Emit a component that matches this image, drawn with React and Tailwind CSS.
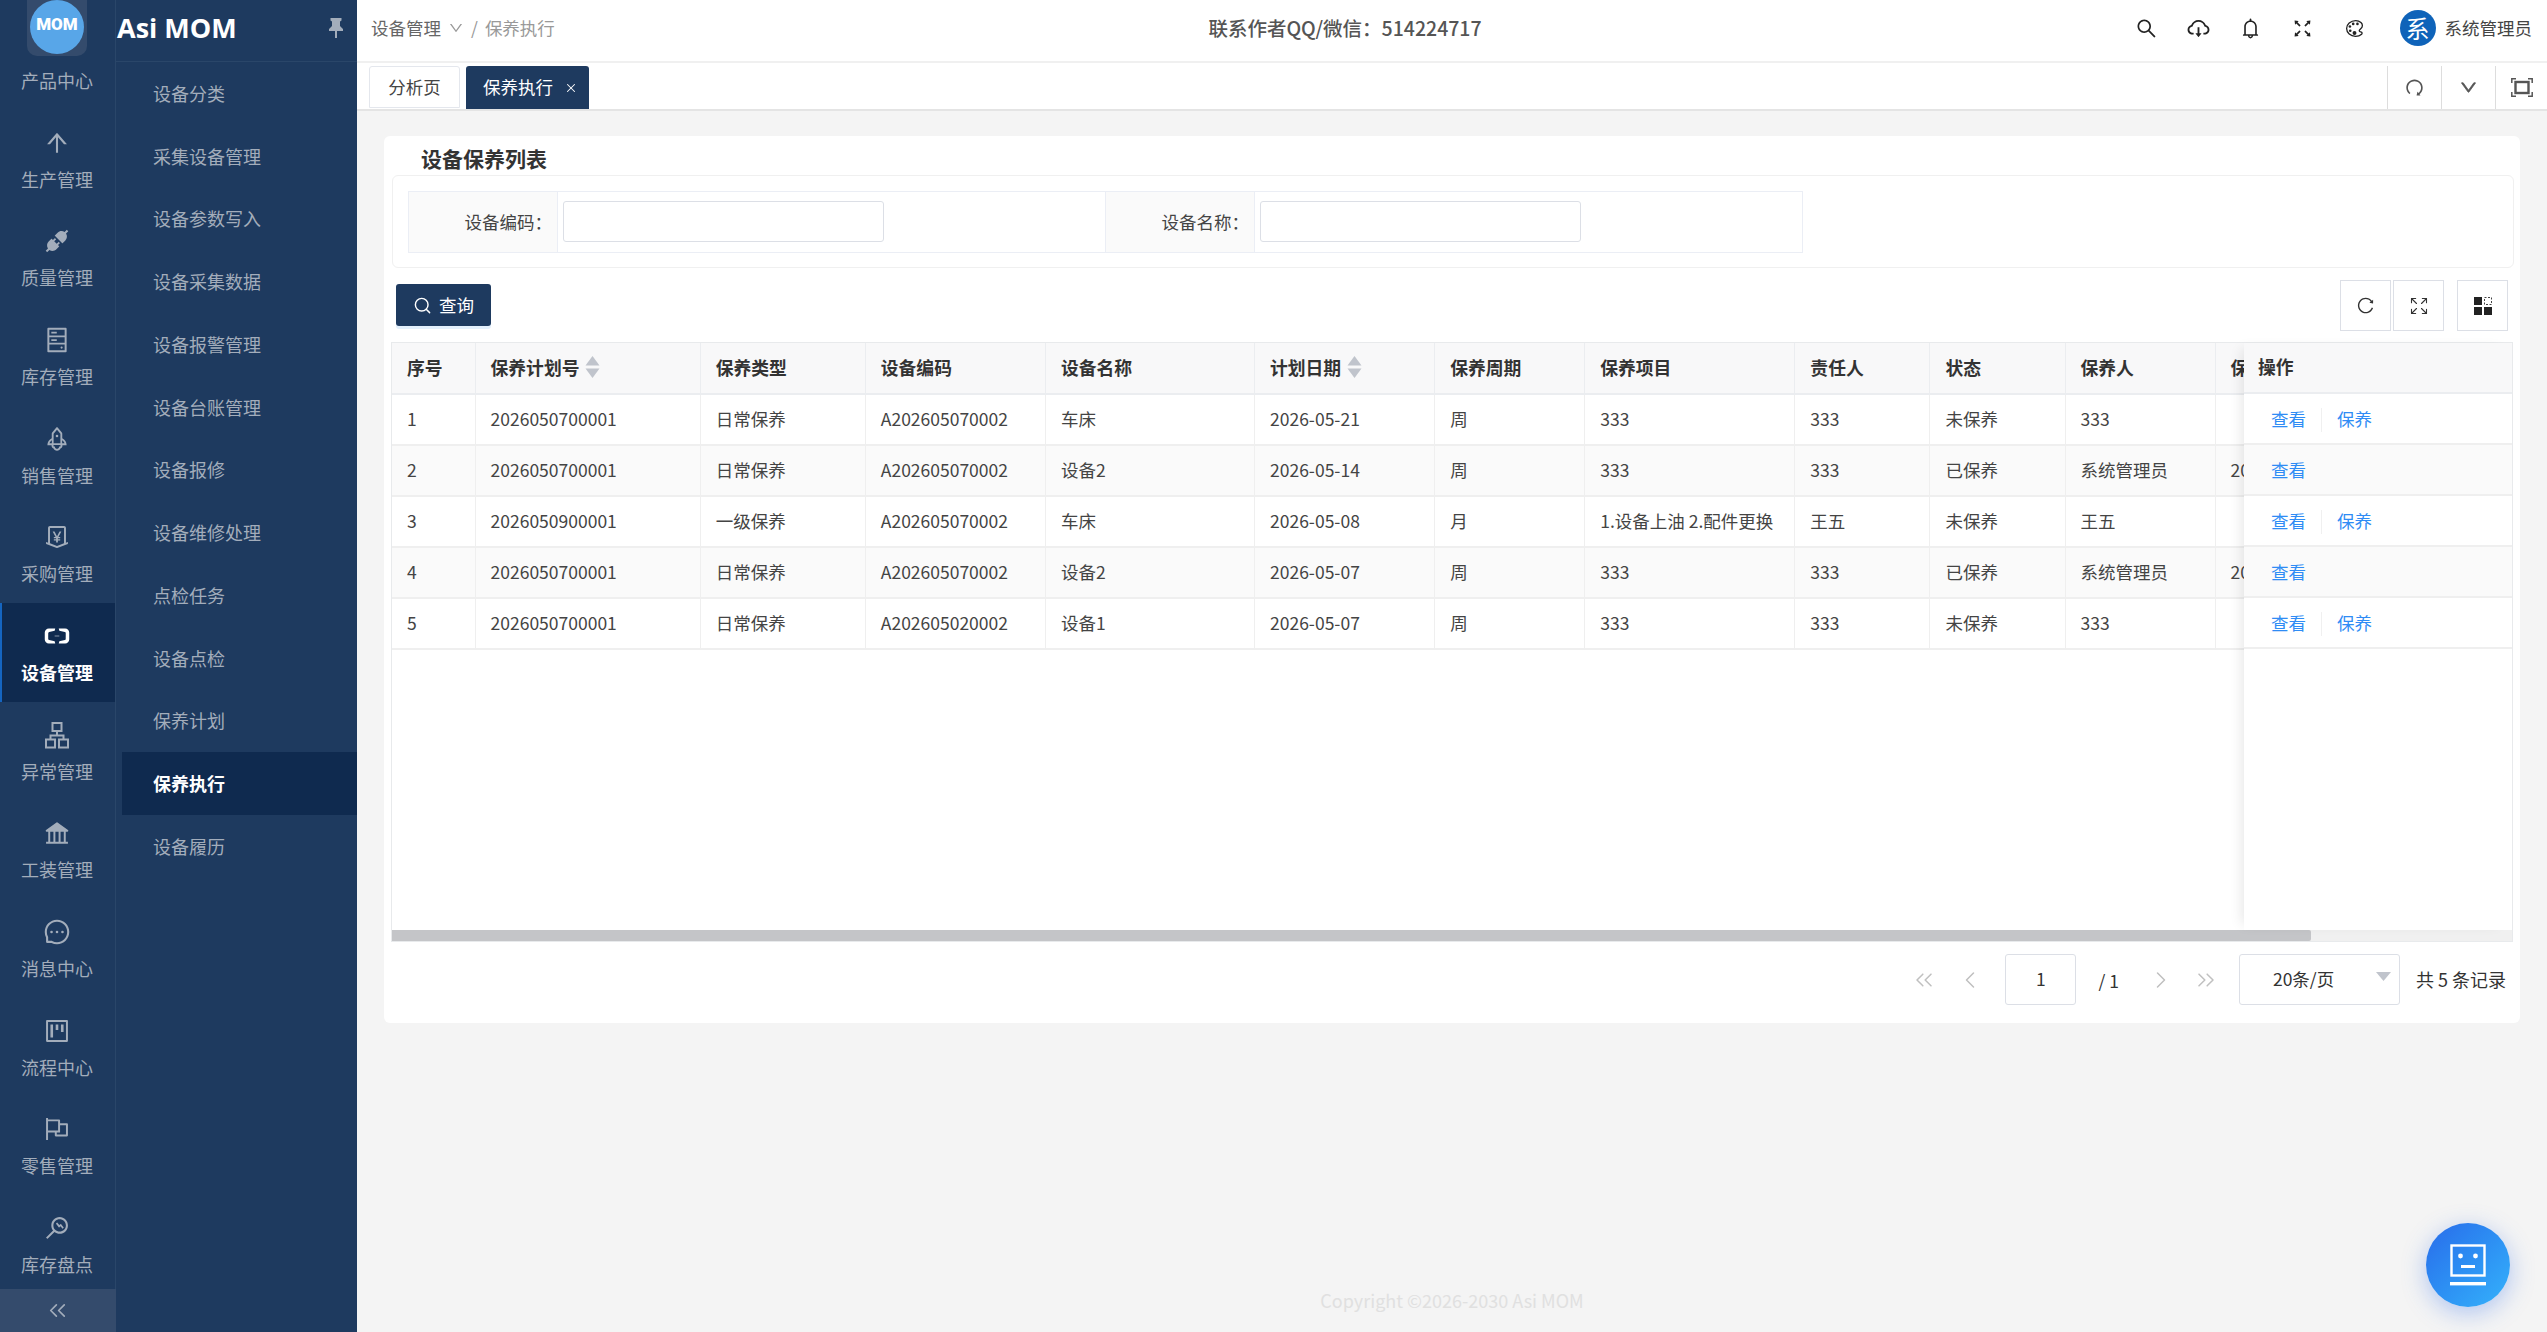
import React from "react";
import {
  AiOutlineArrowUp, AiFillApi, AiOutlineHdd, AiOutlineRocket, AiOutlineMoneyCollect,
  AiOutlineAliyun, AiFillBank, AiOutlineMessage, AiOutlineProject,
  AiOutlineFlag, AiOutlineMonitor, AiOutlineSearch, AiOutlineCloudDownload,
  AiOutlineBell, AiOutlineFullscreen, AiOutlineDown, AiOutlineRedo, AiOutlineReload,
} from "react-icons/ai";
import { IoColorPaletteOutline } from "react-icons/io5";
import { ChevronLeft, ChevronRight, ChevronsLeft, ChevronsRight, X, Search, Expand } from "lucide-react";

function ClusterIcon() {
  return (
    <svg width="28" height="28" viewBox="0 0 28 28" fill="none" stroke="currentColor" strokeWidth="2">
      <rect x="9.500" y="2" width="9" height="8" />
      <rect x="3" y="18.500" width="9" height="8" />
      <rect x="16" y="18.500" width="9" height="8" />
      <path d="M14 10v4.500M7.500 18.500v-4h13v4" />
    </svg>
  );
}

const railItems = [
  { label: "生产管理", icon: AiOutlineArrowUp },
  { label: "质量管理", icon: AiFillApi },
  { label: "库存管理", icon: AiOutlineHdd },
  { label: "销售管理", icon: AiOutlineRocket },
  { label: "采购管理", icon: AiOutlineMoneyCollect },
  { label: "设备管理", icon: AiOutlineAliyun, active: true },
  { label: "异常管理", icon: ClusterIcon },
  { label: "工装管理", icon: AiFillBank },
  { label: "消息中心", icon: AiOutlineMessage },
  { label: "流程中心", icon: AiOutlineProject },
  { label: "零售管理", icon: AiOutlineFlag },
  { label: "库存盘点", icon: AiOutlineMonitor },
];

const subItems = [
  "设备分类", "采集设备管理", "设备参数写入", "设备采集数据", "设备报警管理", "设备台账管理",
  "设备报修", "设备维修处理", "点检任务", "设备点检", "保养计划", "保养执行", "设备履历",
];

const columns = [
  { title: "序号", w: 83 },
  { title: "保养计划号", w: 225, sort: true },
  { title: "保养类型", w: 165 },
  { title: "设备编码", w: 180 },
  { title: "设备名称", w: 209 },
  { title: "计划日期", w: 180, sort: true },
  { title: "保养周期", w: 150 },
  { title: "保养项目", w: 210 },
  { title: "责任人", w: 135 },
  { title: "状态", w: 135 },
  { title: "保养人", w: 150 },
  { title: "保养日期", w: 253 },
  { title: "操作", w: 270 },
];

const rows = [
  ["1", "2026050700001", "日常保养", "A202605070002", "车床", "2026-05-21", "周", "333", "333", "未保养", "333", ""],
  ["2", "2026050700001", "日常保养", "A202605070002", "设备2", "2026-05-14", "周", "333", "333", "已保养", "系统管理员", "2026-05-07"],
  ["3", "2026050900001", "一级保养", "A202605070002", "车床", "2026-05-08", "月", "1.设备上油 2.配件更换", "王五", "未保养", "王五", ""],
  ["4", "2026050700001", "日常保养", "A202605070002", "设备2", "2026-05-07", "周", "333", "333", "已保养", "系统管理员", "2026-05-07"],
  ["5", "2026050700001", "日常保养", "A202605020002", "设备1", "2026-05-07", "周", "333", "333", "未保养", "333", ""],
];

function SortMark() {
  return (
    <svg width="15" height="22" viewBox="0 0 15 22" className="ml-[6px] shrink-0" fill="#c0c4cc">
      <path d="M7.5 0 14.5 9.5H.5z" />
      <path d="M7.5 22 14.5 12.5H.5z" />
    </svg>
  );
}

function Rail() {
  return (
    <div className="flex h-full w-[116px] shrink-0 flex-col">
      <div className="min-h-0 flex-1 overflow-hidden border-r border-[#2a4669]">
        <div className="flex h-[56px] justify-center pr-[1px]">
          <div className="flex h-[56px] w-[60px] items-start justify-center rounded-b-[10px] bg-[#344b6c]">
            <div className="flex h-[54px] w-[54px] items-center justify-center rounded-full bg-[#58a6e8] pb-[4px] font-['Roboto',sans-serif] text-[17px] font-black text-white">
              MOM
            </div>
          </div>
        </div>
        <div className="flex h-[53.5px] items-center justify-center pb-[4px] pr-[1px] text-[18px] text-[#a3adbb]">产品中心</div>
        {railItems.map((item) => {
          const Icon = item.icon;
          return (
            <div
              key={item.label}
              className={
                item.active
                  ? "flex h-[98.7px] flex-col items-center border-l-2 border-[#1565c0] bg-[#0f2a4f] pr-[3px] pt-[19px] font-bold text-white"
                  : "flex h-[98.7px] flex-col items-center pr-[1px] pt-[19px] text-[#a3adbb]"
              }
            >
              <Icon size={28} />
              <span className="mt-[9px] text-[18px] leading-[26px]">{item.label}</span>
            </div>
          );
        })}
      </div>
      <div className="flex h-[43px] shrink-0 items-center justify-center bg-[#344b6c] pr-[1px] text-[#a3adbb]">
        <ChevronsLeft size={27} strokeWidth={1.5} />
      </div>
    </div>
  );
}

function SubMenu() {
  return (
    <div className="flex h-full w-[241px] shrink-0 flex-col">
      <div className="flex h-[62px] shrink-0 items-center justify-between border-b border-[#2a4669] pb-[6px] pl-[1px] pr-[14px]">
        <span className="font-['Open_Sans',sans-serif] text-[27px] font-bold leading-none text-white">Asi MOM</span>
        <svg width="14" height="20" viewBox="0 0 14 20" fill="#a3adbb">
          <path d="M1.5 0h11v2.5l-1.5 1V8l3 3v2H8v7H6v-7H0v-2l3-3V3.500l-1.500-1z" />
        </svg>
      </div>
      <div className="flex flex-col">
        {subItems.map((s) => (
          <div
            key={s}
            className={
              s === "保养执行"
                ? "ml-[6px] flex h-[62.75px] items-center bg-[#0f2a4f] pl-[31px] text-[18px] font-bold text-white"
                : "flex h-[62.75px] items-center pl-[37px] text-[18px] text-[#a3adbb]"
            }
          >
            {s}
          </div>
        ))}
      </div>
    </div>
  );
}

function TopBar() {
  return (
    <div className="flex h-[63px] shrink-0 items-center border-b-2 border-[#f0f0f0] bg-white pb-[5px] pl-[14px] pr-[15px] text-[#333]">
      <div className="flex w-[768px] items-center gap-[7px] text-[17.5px] text-[#666]">
        <span>设备管理</span>
        <AiOutlineDown size={16} className="text-[#999]" />
        <span className="text-[#999]">/</span>
        <span className="text-[#999]">保养执行</span>
      </div>
      <div className="w-[412px] text-center text-[19.5px] font-medium text-[#555]">联系作者QQ/微信：514224717</div>
      <div className="ml-auto flex items-center">
        <div className="mr-[19px] flex items-center text-[#222]">
          <div className="flex w-[52px] justify-center"><AiOutlineSearch size={23} /></div>
          <div className="flex w-[52px] justify-center"><AiOutlineCloudDownload size={25} /></div>
          <div className="flex w-[52px] justify-center"><AiOutlineBell size={23} /></div>
          <div className="flex w-[52px] justify-center"><AiOutlineFullscreen size={23} /></div>
          <div className="flex w-[52px] justify-center"><IoColorPaletteOutline size={21} /></div>
        </div>
        <div className="flex h-[36px] w-[36px] items-center justify-center rounded-full bg-[#0f63b9] text-[24px] text-white">系</div>
        <span className="ml-[9px] text-[17.5px] text-[#444]">系统管理员</span>
      </div>
    </div>
  );
}

function TabBar() {
  return (
    <div className="flex h-[48px] shrink-0 border-b-2 border-[#e4e4e4] bg-white pl-[12px]">
      <div className="mt-[3px] flex h-[42px] w-[91px] items-center justify-center rounded-t-[3px] border border-[#e4e7ed] text-[17.5px] text-[#444]">
        分析页
      </div>
      <div className="ml-[6px] mt-[3px] flex h-[43px] w-[123px] items-center gap-[11px] rounded-t-[3px] bg-[#1e3a5f] pl-[17px] text-[17.5px] text-white">
        保养执行
        <X size={14} strokeWidth={1.8} />
      </div>
      <div className="ml-auto flex pt-[3px] text-[#555]">
        <div className="flex w-[54px] items-center justify-center border-l border-[#ddd]"><AiOutlineRedo size={21} /></div>
        <div className="flex w-[54px] items-center justify-center border-l border-[#ddd]">
          <AiOutlineDown size={19} stroke="currentColor" strokeWidth={40} />
        </div>
        <div className="flex w-[52px] items-center justify-center border-l border-[#ddd]">
          <svg width="22" height="19" viewBox="0 0 22 19" fill="none" stroke="#555" strokeWidth="1.500">
            <path d="M.8 5V.8H5M17 .8h4.200V5M21.200 14v4.200H17M5 18.200H.8V14" />
            <rect x="4.500" y="4" width="13" height="11" strokeWidth="2.400" />
          </svg>
        </div>
      </div>
    </div>
  );
}

function FilterField({ label }) {
  return (
    <div className="flex h-full w-[697px]">
      <div className="flex w-[150px] items-center justify-end border-x border-[#ebeef5] bg-[#fafafa] pr-[5px] pt-[2px] text-[17.5px] text-[#444]">
        {label}：
      </div>
      <div className="flex flex-1 items-center pl-[5px]">
        <div className="h-[41px] w-[321px] rounded-[3px] border border-[#dcdfe6] bg-white" />
      </div>
    </div>
  );
}

function Filters() {
  return (
    <div className="ml-[1px] mr-[-1px] flex h-[93px] items-center rounded-[6px] border border-[#f0f0f0] pl-[15px]">
      <div className="flex h-[62px] border-y border-r border-[#ebeef5]">
        <FilterField label="设备编码" />
        <FilterField label="设备名称" />
      </div>
    </div>
  );
}

function ToolButton({ children, className = "" }) {
  return (
    <div className={"flex h-[51px] w-[51px] items-center justify-center border border-[#dcdfe6] text-[#333] " + className}>
      {children}
    </div>
  );
}

function Toolbar() {
  return (
    <div className="flex h-[74px] items-start justify-between pl-[5px] pr-[5px]">
      <div className="mt-[16px] flex h-[42px] w-[95px] items-center justify-center gap-[7px] rounded-[3px] bg-[#1e3a5f] text-[17.5px] text-white shadow-[0_3px_0_#e3f0fc]">
        <Search size={19} strokeWidth={1.8} />
        查询
      </div>
      <div className="mt-[12px] flex">
        <ToolButton><AiOutlineReload size={19} /></ToolButton>
        <ToolButton className="ml-[2px]"><Expand size={20} strokeWidth={1.3} /></ToolButton>
        <ToolButton className="ml-[13px]">
          <svg width="18" height="18" viewBox="0 0 18 18" fill="#222">
            <rect x="0" y="0" width="8" height="8" />
            <rect x="10.500" y="0.500" width="7" height="7" fill="none" stroke="#444" strokeDasharray="2 1.500" />
            <rect x="0" y="10" width="8" height="8" />
            <rect x="10" y="10" width="8" height="8" />
          </svg>
        </ToolButton>
      </div>
    </div>
  );
}

function DataTable() {
  const cols = columns.slice(0, -1);
  return (
    <div className="relative flex h-[600px] flex-col border border-[#e8eaec]">
      <div className="min-h-0 flex-1 overflow-hidden">
        <table className="w-[2347px] table-fixed border-collapse text-[17.5px] text-[#444]">
          <colgroup>
            {columns.map((c) => <col key={c.title} style={{ width: c.w }} />)}
          </colgroup>
          <thead>
            <tr className="h-[51px] bg-[#f8f8f9]">
              {columns.map((c) => (
                <th key={c.title} className="border-b-2 border-r border-[#ebedf0] px-[15px] pb-[2px] text-left text-[17.8px] font-bold text-[#333]">
                  <div className="flex items-center whitespace-nowrap">
                    {c.title}
                    {c.sort && <SortMark />}
                  </div>
                </th>
              ))}
            </tr>
          </thead>
          <tbody>
            {rows.map((r, i) => (
              <tr key={i} className={i % 2 ? "h-[51px] bg-[#fafafa]" : "h-[51px] bg-white"}>
                {cols.map((c, j) => (
                  <td key={c.title} className="overflow-hidden whitespace-nowrap border-b-2 border-r border-[#efefef] pl-[15px]">
                    {r[j]}
                  </td>
                ))}
                <td className="border-b-2 border-[#efefef]" />
              </tr>
            ))}
          </tbody>
        </table>
      </div>
      <div className="h-[11px] shrink-0 bg-[#f0f0f0]">
        <div className="h-full w-[1919px] rounded-r-[2px] bg-[#c4c5c8]" />
      </div>
      {/* fixed action column over the scrolling table */}
      <div className="absolute bottom-[11px] right-0 top-0 w-[268px] bg-white text-[17.5px] shadow-[-8px_0_12px_-6px_rgba(0,0,0,0.10)]">
        <div className="flex h-[51px] items-center border-b-2 border-[#ebedf0] bg-[#f8f8f9] pb-[2px] pl-[14px] text-[17.8px] font-bold text-[#333]">操作</div>
        {rows.map((r, i) => (
          <div
            key={i}
            className={
              "flex h-[51px] items-center border-b-2 border-[#efefef] pl-[27px] pt-[2px] text-[#2f8cf5] " +
              (i % 2 ? "bg-[#fafafa]" : "bg-white")
            }
          >
            <span>查看</span>
            {r[9] === "未保养" && (
              <>
                <span className="mx-[15px] h-[24px] w-px bg-[#f0f0f0]" />
                <span>保养</span>
              </>
            )}
          </div>
        ))}
      </div>
    </div>
  );
}

function Pagination() {
  return (
    <div className="flex h-[81px] items-start justify-end pr-[7px] pt-[12px] text-[17.5px] text-[#333]">
      <div className="flex h-[51px] items-center text-[#c0c0c0]">
        <ChevronsLeft size={28} strokeWidth={1.3} />
        <ChevronLeft size={28} strokeWidth={1.3} className="ml-[18px]" />
      </div>
      <div className="ml-[21px] flex h-[51px] w-[71px] items-center justify-center rounded-[3px] border border-[#dcdfe6]">1</div>
      <div className="ml-[22px] flex h-[51px] items-center pt-[3px]">/ 1</div>
      <div className="ml-[28px] flex h-[51px] items-center text-[#c0c0c0]">
        <ChevronRight size={28} strokeWidth={1.3} />
        <ChevronsRight size={28} strokeWidth={1.3} className="ml-[17px]" />
      </div>
      <div className="ml-[19px] flex h-[51px] w-[161px] items-center rounded-[3px] border border-[#dcdfe6] pl-[33px] pr-[8px]">
        20条/页
        <svg width="15" height="9" viewBox="0 0 15 9" fill="#c0c4cc" className="mb-[6px] ml-auto"><path d="M0 0h15L7.500 9z" /></svg>
      </div>
      <div className="ml-[16px] flex h-[51px] items-center text-[18px]">共 5 条记录</div>
    </div>
  );
}

export default function App() {
  return (
    <div className="flex h-[1332px] w-[2547px] overflow-hidden bg-[#f4f4f4] font-['Noto_Sans_CJK_SC','Noto_Sans',sans-serif]">
      <div className="flex h-full w-[357px] shrink-0 bg-[#1e3a5f]">
        <Rail />
        <SubMenu />
      </div>
      <div className="flex h-full min-w-0 flex-1 flex-col">
        <TopBar />
        <TabBar />
        <div className="ml-[27px] mr-[27px] mt-[25px] rounded-[6px] bg-white px-[7px]">
          <div className="flex h-[39px] items-center pl-[30px] pt-[6px] text-[21px] font-bold leading-none text-[#333]">设备保养列表</div>
          <Filters />
          <Toolbar />
          <DataTable />
          <Pagination />
        </div>
        <div className="mt-auto pb-[18px] text-center text-[18px] text-[#e0e0e0]">Copyright ©2026-2030 Asi MOM</div>
      </div>
      <div className="fixed bottom-[25px] right-[37px] flex h-[84px] w-[84px] items-center justify-center rounded-full bg-gradient-to-br from-[#2a6bea] to-[#36b2fb] shadow-[0_6px_24px_rgba(42,107,234,0.35)]">
        <svg width="36" height="42" viewBox="0 0 36 42" fill="none">
          <rect x="1.500" y="1.500" width="33" height="30" stroke="#fff" strokeWidth="2.400" />
          <circle cx="10.500" cy="12" r="2.400" fill="#fff" />
          <circle cx="25.500" cy="12" r="2.400" fill="#fff" />
          <rect x="11" y="21" width="14" height="3" fill="#fff" />
          <rect x="0" y="38" width="36" height="3.400" fill="#fff" />
        </svg>
      </div>
    </div>
  );
}
